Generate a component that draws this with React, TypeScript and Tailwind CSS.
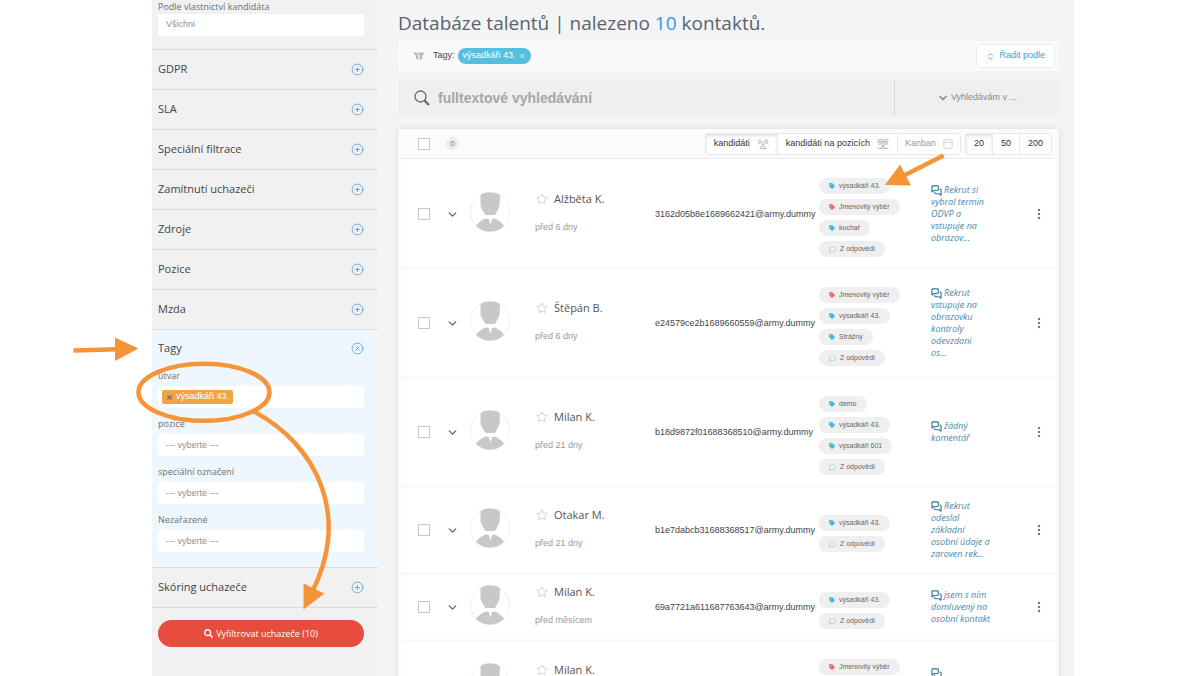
import { useState } from 'react';
import { ChevronDown, ChevronsUpDown, CirclePlus, CircleX, MessagesSquare, Star, X } from 'lucide-react';
import { FaRegComment, FaSearch, FaTag } from 'react-icons/fa';

interface Tag {
  label: string;
  kind: 'blue' | 'red' | 'reply';
}

interface Candidate {
  id: number;
  name: string;
  since: string;
  email: string;
  tags: Tag[];
  comment: string;
}

const reply: Tag = { label: 'Z odpovědí', kind: 'reply' };
const para: Tag = { label: 'výsadkáři 43.', kind: 'blue' };
const named: Tag = { label: 'Jmenovitý výběr', kind: 'red' };

const candidates: Candidate[] = [
  {
    id: 1,
    name: 'Alžběta K.',
    since: 'před 6 dny',
    email: '3162d05b8e1689662421@army.dummy',
    tags: [para, named, { label: 'kuchař', kind: 'blue' }, reply],
    comment: 'Rekrut si\nvybral termin\nODVP a\nvstupuje na\nobrazov...',
  },
  {
    id: 2,
    name: 'Štěpán B.',
    since: 'před 6 dny',
    email: 'e24579ce2b1689660559@army.dummy',
    tags: [named, para, { label: 'Strážný', kind: 'blue' }, reply],
    comment: 'Rekrut\nvstupuje na\nobrazovku\nkontroly\nodevzdani\nos...',
  },
  {
    id: 3,
    name: 'Milan K.',
    since: 'před 21 dny',
    email: 'b18d9872f01688368510@army.dummy',
    tags: [{ label: 'demo', kind: 'blue' }, para, { label: 'výsadkáři 601', kind: 'blue' }, reply],
    comment: 'žádný\nkomentář',
  },
  {
    id: 4,
    name: 'Otakar M.',
    since: 'před 21 dny',
    email: 'b1e7dabcb31688368517@army.dummy',
    tags: [para, reply],
    comment: 'Rekrut\nodeslal\nzákladní\nosobní údaje a\nzaroven rek...',
  },
  {
    id: 5,
    name: 'Milan K.',
    since: 'před měsícem',
    email: '69a7721a611687763643@army.dummy',
    tags: [para, reply],
    comment: 'jsem s ním\ndomluvený na\nosobní kontakt',
  },
  {
    id: 6,
    name: 'Milan K.',
    since: 'před měsícem',
    email: '',
    tags: [named, para, reply],
    comment: '\n\n\n ',
  },
];

const closedSections = ['GDPR', 'SLA', 'Speciální filtrace', 'Zamítnutí uchazeči', 'Zdroje', 'Pozice', 'Mzda'];

const tagFields = [
  { id: 'pozice', label: 'pozice' },
  { id: 'oznaceni', label: 'speciální označení' },
  { id: 'nezarazene', label: 'Nezařazené' },
];

const checkboxClass =
  'block h-3 w-3 appearance-none border border-[#c8c8c8] bg-white checked:bg-[#5bc0de]';
const labelClass = 'block h-3 text-[9px] leading-3 text-[#6e6e6e]';
const fieldClass =
  "block h-[22px] w-full rounded-xs bg-white px-2 font-['Liberation_Sans',sans-serif] text-[9px] text-[#8f8f8f] placeholder:text-[#8f8f8f] outline-none";

function ClosedSection({ title }: { title: string }) {
  return (
    <button className="flex h-10 w-full items-center justify-between border-b border-[#dcdcdf] pr-[14px] pl-[6px] text-[11px] font-medium text-[#444]">
      {title}
      <CirclePlus size={13} strokeWidth={1.6} className="text-[#5a9fdb]" />
    </button>
  );
}

function TagPill({ tag }: { tag: Tag }) {
  return (
    <span className="flex h-4 items-center gap-1 rounded-full bg-[#efefef] px-[10px] text-[7px] text-[#666]">
      {tag.kind === 'reply' && <FaRegComment size={7} className="text-[#8ccfe0]" />}
      {tag.kind === 'blue' && <FaTag size={6} className="text-[#42b9e0]" />}
      {tag.kind === 'red' && <FaTag size={6} className="text-[#f4696f]" />}
      {tag.label}
    </span>
  );
}

function Avatar() {
  return (
    <svg viewBox="0 0 40 40" className="mb-1 block h-10 w-10" aria-hidden="true">
      <circle cx="20" cy="20" r="19.5" fill="#fff" stroke="#efefef" />
      <path d="M10.500 4 Q11 1 20 .6 Q29 1 30 4 L29.500 14 Q28 18 25 23 H15.500 Q12 18 10.500 14 Z" fill="#c8c8c8" />
      <path d="M15.500 26.500 L19 27 L20.500 33 L22 27 L25 26.500 Q31 29 34 34 Q28 39.500 20 39.500 Q12 39.500 6 34 Q9 29 15.500 26.500 Z" fill="#c8c8c8" />
    </svg>
  );
}

function PeopleIcon() {
  return (
    <svg viewBox="0 0 24 20" className="h-[10px] w-3" fill="none" stroke="#b0b0b0" strokeWidth="1.6" aria-hidden="true">
      <circle cx="5" cy="4" r="2.500" />
      <circle cx="19" cy="4" r="2.500" />
      <circle cx="12" cy="9" r="3" />
      <path d="M1 11 Q2 7.500 7 8 M23 11 Q22 7.500 17 8 M6 19 Q7 13.500 12 13.500 Q17 13.500 18 19 Z" />
    </svg>
  );
}

function PositionsIcon() {
  return (
    <svg viewBox="0 0 24 20" className="h-[10px] w-3" fill="none" stroke="#a5a5a5" strokeWidth="1.6" aria-hidden="true">
      <path d="M1 1.500 H23 M1 5 H23 M1 18.500 H6 M18 18.500 H23" />
      <circle cx="5" cy="9" r="2" />
      <circle cx="19" cy="9" r="2" />
      <circle cx="12" cy="10" r="3" />
      <path d="M7 19 Q8 14.500 12 14.500 Q16 14.500 17 19 Z" />
    </svg>
  );
}

function BoardIcon() {
  return (
    <svg viewBox="0 0 20 20" className="h-[10px] w-[10px]" fill="none" stroke="#cfcfcf" strokeWidth="1.8" aria-hidden="true">
      <rect x="1.500" y="1.500" width="17" height="17" rx="3" />
      <path d="M2 6.500 H18 M12 10 H16" />
    </svg>
  );
}

function FilterIcon() {
  return (
    <svg viewBox="0 0 24 18" className="h-[9px] w-3" fill="#b8b8b8" aria-hidden="true">
      <path d="M0 1 H7 L11 8 V16 L6 13 V8 Z" />
      <path d="M9 1 H24 L18.500 8 V13 L13.500 17 V8 Z" />
    </svg>
  );
}

function MagnifierIcon() {
  return (
    <svg viewBox="0 0 16 16" className="h-4 w-4" fill="none" stroke="#666" aria-hidden="true">
      <circle cx="6.500" cy="6.500" r="5.500" strokeWidth="1.300" />
      <path d="M10.500 10.500 L15 15" strokeWidth="2.200" />
    </svg>
  );
}

// Hand-drawn guide marks laid over the page
function Annotations() {
  return (
    <svg
      className="pointer-events-none absolute top-0 left-0 h-[676px] w-[1200px]"
      viewBox="0 0 1200 676"
      fill="none"
      stroke="#f6943a"
      strokeWidth="4.500"
      aria-hidden="true"
    >
      <path d="M73.500 350.500 L117 349.300" />
      <path d="M115 337.500 L138.500 348.500 L115 361 Z" fill="#f6943a" stroke="none" />
      <ellipse cx="204" cy="392.300" rx="65.500" ry="28.500" />
      <path d="M253 411 C317 445 350 514 313 590" />
      <path d="M303.500 583.500 L324.500 593.500 L303.500 609.500 Z" fill="#f6943a" stroke="none" />
      <path d="M943.500 155.500 L904 175.500" />
      <path d="M885 185 L900 164.500 L911 185.500 Z" fill="#f6943a" stroke="none" />
    </svg>
  );
}

export default function App() {
  const [search, setSearch] = useState('');

  return (
    <div className="relative flex h-screen overflow-hidden bg-white pr-[126px] pl-[152px] font-['Liberation_Sans',sans-serif]">
      <aside className="w-[226px] shrink-0 bg-[#f1f1f2] font-['Open_Sans',sans-serif]">
        <div className="h-[50px] border-b border-[#dcdcdf] pt-[1px] pr-[14px] pl-[6px]">
          <label htmlFor="vlastnictvi" className={labelClass}>
            Podle vlastnictví kandidáta
          </label>
          <select id="vlastnictvi" className={`${fieldClass} mt-[1px] appearance-none`}>
            <option>Všichni</option>
          </select>
        </div>

        {closedSections.map((title) => (
          <ClosedSection key={title} title={title} />
        ))}

        <section className="border-b border-[#dcdcdf] bg-[#eff7fe] pr-[14px] pb-[15px] pl-[6px]">
          <button className="flex h-9 w-full items-center justify-between text-[11px] font-medium text-[#444]">
            Tagy
            <CircleX size={13} strokeWidth={1.6} className="text-[#5a9fdb]" />
          </button>
          <div className="mt-1 flex flex-col gap-[10px]">
            <div>
              <label htmlFor="utvar" className={labelClass}>
                útvar
              </label>
              <div className="mt-1 flex h-[22px] items-center rounded-xs bg-white px-1">
                <span className="flex h-[14px] shrink-0 items-center gap-[3px] rounded-xs bg-[#f0a445] px-1 font-['Liberation_Sans',sans-serif] text-[9px] text-white">
                  <button aria-label="Odebrat výsadkáři 43." className="text-[#7c7566]">
                    <X size={7} strokeWidth={5} />
                  </button>
                  výsadkáři 43.
                </span>
                <input id="utvar" className="min-w-0 flex-1 outline-none" />
              </div>
            </div>
            {tagFields.map((field) => (
              <div key={field.id}>
                <label htmlFor={field.id} className={labelClass}>
                  {field.label}
                </label>
                <input id={field.id} placeholder="--- vyberte ---" className={`${fieldClass} mt-1`} />
              </div>
            ))}
          </div>
        </section>

        <ClosedSection title="Skóring uchazeče" />

        <div className="pt-3 pr-[14px] pl-[6px]">
          <button className="flex h-[27px] w-full items-center justify-center gap-[3px] rounded-full bg-[#e84c3d] text-[9px] text-white">
            <FaSearch size={9} />
            Vyfiltrovat uchazeče (10)
          </button>
        </div>
      </aside>

      <main className="min-w-0 flex-1 bg-[#f3f4f6] pr-[15px] pl-5">
        <h1 className="pt-[9px] font-['Open_Sans',sans-serif] text-[19px] leading-7 text-[#5b626d]">
          Databáze talentů | nalezeno <span className="text-[#2f97e8]">10</span> kontaktů.
        </h1>

        <div className="mt-1 flex h-[30px] items-center bg-[#fafafb] pr-1 pl-[15px] text-[9px]">
          <FilterIcon />
          <span className="ml-2 text-[#444]">Tagy:</span>
          <span className="ml-[3px] flex h-4 items-center gap-[2px] rounded-full bg-[#55bfdf] px-[5px] text-white">
            výsadkáři 43.
            <button aria-label="Zrušit filtr">
              <X size={8} strokeWidth={2} />
            </button>
          </span>
          <button className="ml-auto flex h-6 items-center gap-1 rounded-sm border border-[#ececef] bg-white px-[9px] text-[#3d9be0]">
            <ChevronsUpDown size={9} strokeWidth={2} />
            Řadit podle
          </button>
        </div>

        <div className="mt-[9px] flex h-9 items-center bg-[#efefef] pl-4">
          <MagnifierIcon />
          <input
            aria-label="fulltextové vyhledávání"
            value={search}
            onChange={(e) => setSearch(e.target.value)}
            placeholder="fulltextové vyhledávání"
            className="ml-2 min-w-0 flex-1 text-[14px] font-bold text-[#555] outline-none placeholder:text-[#a6a6a6]"
          />
          <button className="flex h-full w-[165px] items-center justify-center gap-[2px] border-l border-[#d8d8d8] text-[9px] text-[#888]">
            <ChevronDown size={12} strokeWidth={3} />
            Vyhledávám v ...
          </button>
        </div>

        <div className="mt-[13px] border-x-[3px] border-[#fafafa] bg-white shadow-[0_0_6px_rgba(0,0,0,0.12)]">
          <div className="flex h-[30px] items-center border-b border-[#ececec] bg-[#fbfbfb] pr-1 pl-[17px] text-[9px] text-[#333]">
            <input type="checkbox" aria-label="Vybrat vše" className={checkboxClass} />
            <span className="ml-4 flex h-[13px] w-[13px] items-center justify-center rounded-full bg-[#e9eeee] text-[8px] text-[#777]">
              0
            </span>
            <div className="ml-auto flex h-[22px] rounded-sm border border-[#e8e8e8] bg-white">
              <button className="flex items-center gap-[7px] border-r border-[#e8e8e8] px-2 shadow-[inset_0_2px_3px_rgba(0,0,0,0.12)]">
                kandidáti
                <PeopleIcon />
              </button>
              <button className="flex items-center gap-[7px] border-r border-[#e8e8e8] px-2">
                kandidáti na pozicích
                <PositionsIcon />
              </button>
              <button className="flex items-center gap-[7px] px-[7px] text-[#999]">
                Kanban
                <BoardIcon />
              </button>
            </div>
            <div className="ml-1 flex h-[22px] rounded-sm border border-[#e8e8e8] bg-white">
              <button className="border-r border-[#e8e8e8] px-2 shadow-[inset_0_2px_3px_rgba(0,0,0,0.12)]">20</button>
              <button className="border-r border-[#e8e8e8] px-2">50</button>
              <button className="px-2">200</button>
            </div>
          </div>

          <table className="mt-[2px] w-full table-fixed">
            <colgroup>
              <col className="w-[43px]" />
              <col className="w-[26px]" />
              <col className="w-[64px]" />
              <col className="w-[121px]" />
              <col className="w-[164px]" />
              <col className="w-[112px]" />
              <col className="w-[92px]" />
              <col />
            </colgroup>
            <tbody>
              {candidates.map((c) => (
                <tr key={c.id} className="border-b-[3px] border-[#f9f9f9]">
                  <td className="pl-[17px]">
                    <input type="checkbox" aria-label={`Vybrat ${c.name}`} className={checkboxClass} />
                  </td>
                  <td>
                    <button aria-label="Rozbalit" className="ml-[2px] block text-[#666]">
                      <ChevronDown size={13} strokeWidth={2.5} />
                    </button>
                  </td>
                  <td>
                    <Avatar />
                  </td>
                  <td>
                    <div className="flex items-center gap-[6px] pl-[2px] font-['Open_Sans',sans-serif] text-[11px] leading-4 text-[#555]">
                      <Star size={12} strokeWidth={1.5} className="text-[#c0c0c0]" />
                      {c.name}
                    </div>
                    <div className="mt-3 pb-[2px] pl-[1px] text-[9px] leading-4 text-[#999]">{c.since}</div>
                  </td>
                  <td className="pt-[2px] text-[9px] text-[#444]">{c.email}</td>
                  <td className="pt-[17px] pb-[10px]">
                    <div className="flex flex-col items-start gap-[5px]">
                      {c.tags.map((tag) => (
                        <TagPill key={tag.label} tag={tag} />
                      ))}
                    </div>
                  </td>
                  <td className="py-3 font-['Open_Sans',sans-serif] text-[9px] leading-3 whitespace-pre-line text-[#4788a8] italic">
                    <MessagesSquare size={11} strokeWidth={2.5} className="mr-[2px] inline align-middle text-[#35789b]" />
                    {c.comment}
                  </td>
                  <td>
                    <button aria-label="Akce" className="ml-[14px] block">
                      <svg viewBox="0 0 4 12" className="h-3 w-1" fill="#777">
                        <circle cx="2" cy="2" r="1.200" />
                        <circle cx="2" cy="6" r="1.200" />
                        <circle cx="2" cy="10" r="1.200" />
                      </svg>
                    </button>
                  </td>
                </tr>
              ))}
            </tbody>
          </table>
        </div>
      </main>

      <Annotations />
    </div>
  );
}
